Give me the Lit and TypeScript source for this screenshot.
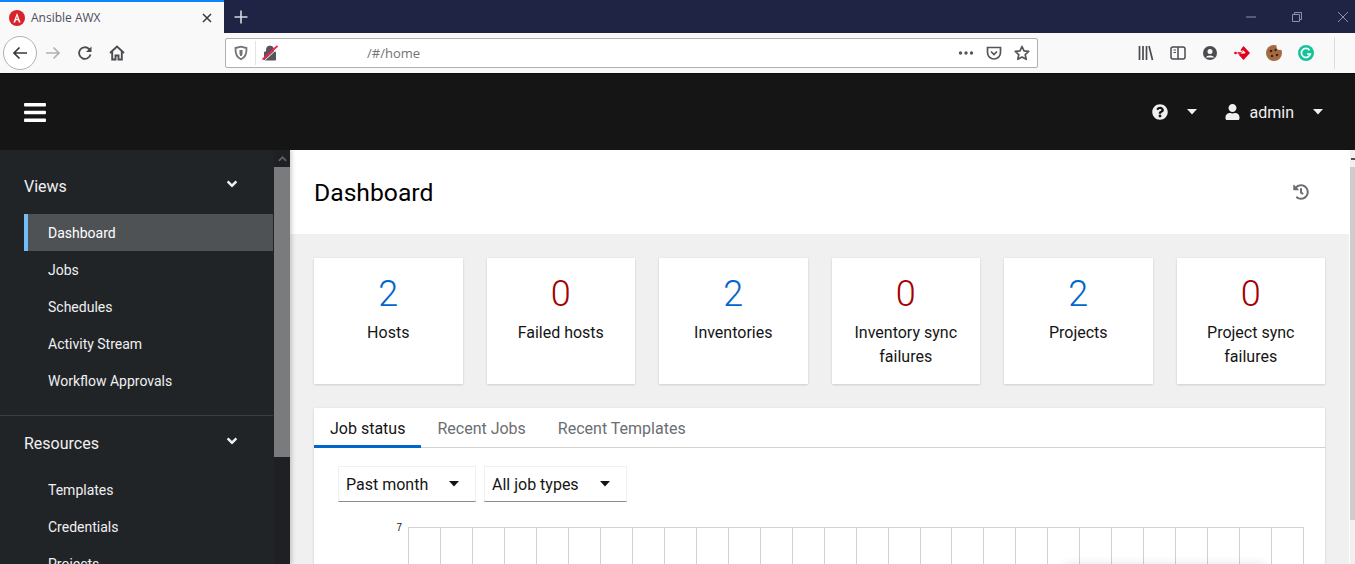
import { LitElement, html, css, svg } from 'lit';
import { customElement } from 'lit/decorators.js';

const stats = [
  { n: 2, label: 'Hosts', bad: false },
  { n: 0, label: 'Failed hosts', bad: true },
  { n: 2, label: 'Inventories', bad: false },
  { n: 0, label: 'Inventory sync failures', bad: true },
  { n: 2, label: 'Projects', bad: false },
  { n: 0, label: 'Project sync failures', bad: true },
];

const views = ['Dashboard', 'Jobs', 'Schedules', 'Activity Stream', 'Workflow Approvals'];
const resources = ['Templates', 'Credentials', 'Projects'];

const icon = (vb: string, d: any, cls = '') => html`<svg class=${cls} viewBox=${vb}>${d}</svg>`;

// font awesome style glyphs used by the app header
const bars = svg`<path fill="currentColor" d="M16 132h416c8.837 0 16-7.163 16-16V76c0-8.837-7.163-16-16-16H16C7.163 60 0 67.163 0 76v40c0 8.837 7.163 16 16 16zm0 160h416c8.837 0 16-7.163 16-16v-40c0-8.837-7.163-16-16-16H16c-8.837 0-16 7.163-16 16v40c0 8.837 7.163 16 16 16zm0 160h416c8.837 0 16-7.163 16-16v-40c0-8.837-7.163-16-16-16H16c-8.837 0-16 7.163-16 16v40c0 8.837 7.163 16 16 16z"/>`;
const question = svg`<path fill="currentColor" d="M504 256c0 136.997-111.043 248-248 248S8 392.997 8 256C8 119.083 119.043 8 256 8s248 111.083 248 248zM262.655 90c-54.497 0-89.255 22.957-116.549 63.758-3.536 5.286-2.353 12.415 2.715 16.258l34.699 26.31c5.205 3.947 12.621 3.008 16.665-2.122 17.864-22.658 30.113-35.797 57.303-35.797 20.429 0 45.698 13.148 45.698 32.958 0 14.976-12.363 22.667-32.534 33.976C247.128 238.528 216 254.941 216 296v4c0 6.627 5.373 12 12 12h56c6.627 0 12-5.373 12-12v-1.333c0-28.462 83.186-29.647 83.186-106.667 0-58.002-60.165-102-116.531-102zM256 338c-25.365 0-46 20.635-46 46 0 25.364 20.635 46 46 46s46-20.636 46-46c0-25.365-20.635-46-46-46z"/>`;
const user = svg`<path fill="currentColor" d="M224 256c70.7 0 128-57.3 128-128S294.7 0 224 0 96 57.3 96 128s57.3 128 128 128zm89.6 32h-16.7c-22.2 10.2-46.9 16-72.9 16s-50.6-5.8-72.9-16h-16.7C60.2 288 0 348.2 0 422.4V464c0 26.5 21.5 48 48 48h352c26.5 0 48-21.5 48-48v-41.6c0-74.2-60.2-134.4-134.4-134.4z"/>`;
const angle = svg`<path fill="currentColor" d="M143 352.3L7 216.3c-9.4-9.4-9.4-24.6 0-33.9l22.6-22.6c9.4-9.4 24.6-9.4 33.9 0l96.4 96.4 96.4-96.4c9.4-9.4 24.6-9.4 33.9 0l22.6 22.6c9.4 9.4 9.4 24.6 0 33.9l-136 136c-9.2 9.4-24.4 9.4-33.8 0z"/>`;
const history = svg`<path fill="currentColor" d="M504 255.531c.253 136.64-111.18 248.372-247.82 248.468-59.015.042-113.223-20.53-155.822-54.911-11.077-8.94-11.905-25.541-1.839-35.607l11.267-11.267c8.609-8.609 22.353-9.551 31.891-1.984C173.062 425.135 212.781 440 256 440c101.705 0 184-82.311 184-184 0-101.705-82.311-184-184-184-48.814 0-93.149 18.969-126.068 49.932l50.754 50.754c10.08 10.08 2.941 27.314-11.313 27.314H24c-8.837 0-16-7.163-16-16V38.627c0-14.254 17.234-21.393 27.314-11.314l49.372 49.372C129.209 34.136 189.552 8 256 8c136.81 0 247.747 110.78 248 247.531zm-180.912 78.784l9.823-12.63c8.138-10.463 6.253-25.542-4.21-33.679L288 256.349V152c0-13.255-10.745-24-24-24h-16c-13.255 0-24 10.745-24 24v135.651l65.409 50.874c10.463 8.137 25.542 6.253 33.679-4.21z"/>`;

const caret = html`<svg class="caret" viewBox="0 0 10 6"><path fill="currentColor" d="M0 0h10L5 5.5z"/></svg>`;

@customElement('app-root')
export class AppRoot extends LitElement {
  static styles = css`
    :host {
      display: block;
      height: 100vh;
      overflow: hidden;
      font-family: Roboto, sans-serif;
      color: #151515;
    }
    svg { display: block; flex: none; }

    /* browser chrome */
    .tabbar { display: flex; height: 33px; background: #1f2344; }
    .tab {
      width: 224px;
      box-sizing: border-box;
      display: flex;
      align-items: center;
      padding: 0 9px;
      gap: 6px;
      background: #f9f9fa;
      border-top: 2px solid #0a84ff;
      font: 12px 'Open Sans', sans-serif;
      color: #4d4f57;
    }
    .tab .title { flex: 1; }
    .tab-close { width: 12px; height: 12px; margin-right: 2px; color: #38383d; }
    .fav { width: 16px; height: 16px; }
    .new-tab { width: 16px; height: 16px; margin: 1px 0 0 9px; align-self: center; color: #d8d9df; }
    .winbtns { margin-left: auto; display: flex; align-items: center; color: #8f92a6; padding-right: 6px; }
    .winbtns svg { width: 12px; height: 12px; }
    .winbtns .min { margin-right: 34px; }
    .winbtns .max { margin-right: 34px; }

    .toolbar {
      display: flex;
      align-items: center;
      height: 40px;
      background: #f9f9fa;
      border-bottom: 1px solid #0c0c0d;
      color: #4b4b50;
    }
    .nav-btns { width: 225px; flex: none; display: flex; align-items: center; padding-left: 3px; box-sizing: border-box; }
    .back {
      width: 34px;
      height: 34px;
      box-sizing: border-box;
      border: 1px solid #b1b1b3;
      border-radius: 50%;
      background: #fff;
      display: flex;
      align-items: center;
      justify-content: center;
    }
    .tool { width: 16px; height: 16px; }
    .fwd { margin-left: 8px; color: #b1b1b3; }
    .reload { margin-left: 16px; }
    .home { margin-left: 16px; }
    .urlbar {
      width: 813px;
      flex: none;
      height: 30px;
      box-sizing: border-box;
      display: flex;
      align-items: center;
      background: #fff;
      border: 1px solid #b1b1b3;
      border-radius: 2px;
      padding: 0 7px;
      font: 13px 'Open Sans', sans-serif;
      color: #737373;
    }
    .urlbar .sep { width: 1px; height: 24px; background: #e4e4e6; margin: 0 6px 0 6px; }
    .urlbar .url { flex: 1; padding-left: 89px; }
    .urlbar .pocket { margin: 0 12px; }
    .addons { display: flex; align-items: center; flex: 1; padding-left: 100px; gap: 16px; }
    .addons .divider { width: 1px; height: 32px; background: #dcdcde; margin-left: 4px; }
    .addons .menu { margin-left: 3px; }

    /* app */
    .masthead {
      height: 76px;
      background: #151515;
      color: #fff;
      display: flex;
      align-items: center;
      padding: 0 32px 0 24px;
    }
    .hamburger { width: 22px; height: 25px; }
    .head-right { margin-left: auto; display: flex; align-items: center; font-size: 16px; color: #f0f0f0; }
    .head-right .q { width: 16px; height: 16px; }
    .head-right .q + .caret { margin-left: 19px; }
    .head-right .u { width: 15px; height: 16px; margin-left: 28px; margin-right: 10px; }
    .caret { width: 10px; height: 6px; }
    .head-right .last { margin-left: 19px; }

    .body { display: flex; height: 414px; overflow: hidden; }
    .sidebar {
      width: 290px;
      flex: none;
      display: flex;
      background: #212427;
      color: #f0f0f0;
      position: relative;
      z-index: 1;
      box-shadow: 2px 0 4px rgba(0, 0, 0, 0.18);
    }
    .nav { width: 273px; padding-top: 8px; flex: none; }
    .section { padding-bottom: 16px; box-shadow: 0 1px 0 #3c3f42; }
    .section:last-child { box-shadow: none; }
    .sec-head {
      display: flex;
      align-items: center;
      justify-content: space-between;
      height: 56px;
      padding: 0 34px 0 24px;
      font-size: 16px;
    }
    .sec-head svg { width: 14px; height: 16px; margin-top: -4px; }
    .item {
      height: 37px;
      margin-left: 24px;
      padding-left: 24px;
      display: flex;
      align-items: center;
      font-size: 14px;
    }
    .item.current { background: #4f5255; color: #fff; box-shadow: inset 4px 0 0 #73bcf7; }
    .side-scroll { width: 16px; margin-left: 1px; background: #1e2023; display: flex; flex-direction: column; }
    .arrow { height: 17px; flex: none; display: flex; align-items: center; justify-content: center; color: #5f6163; }
    .arrow svg { width: 9px; height: 6px; }
    .side-thumb { height: 290px; background: #7a7b7c; }

    main { flex: 1; min-width: 0; background: #f0f0f0; display: flex; }
    .content { flex: 1; min-width: 0; }
    .page-head {
      height: 84px;
      background: #fff;
      display: flex;
      align-items: center;
      justify-content: space-between;
      padding: 0 40px 0 24px;
      box-sizing: border-box;
    }
    h1 { margin: 0; font-size: 24.7px; font-weight: 400; color: #000; }
    .hist { width: 16px; height: 16px; color: #6a6e73; }
    .page-body { padding: 24px 24px 0 24px; }
    .stats { display: grid; grid-template-columns: repeat(6, 1fr); gap: 24px; }
    .stat {
      height: 126px;
      background: #fff;
      box-shadow: 0 1px 2px rgba(3, 3, 3, 0.12), 0 0 2px rgba(3, 3, 3, 0.06);
      text-align: center;
      padding: 16px 16px 0;
      box-sizing: border-box;
      font-size: 16px;
      line-height: 24px;
    }
    .num { font-size: 36px; line-height: 40px; font-weight: 300; color: #06c; margin-bottom: 7px; }
    .num.bad { color: #a30000; }

    .panel {
      margin-top: 24px;
      height: 300px;
      background: #fff;
      box-shadow: 0 1px 2px rgba(3, 3, 3, 0.12), 0 0 2px rgba(3, 3, 3, 0.06);
    }
    .tabs { display: flex; height: 40px; border-bottom: 1px solid #d2d2d2; box-sizing: border-box; font-size: 16px; color: #6a6e73; }
    .tabs div { padding: 0 16px; line-height: 41px; }
    .tabs .on { color: #151515; box-shadow: inset 0 -3px 0 #06c; height: 40px; box-sizing: border-box; }
    .filters { display: flex; gap: 8px; padding: 18px 24px 0; }
    .select {
      height: 36px;
      box-sizing: border-box;
      display: flex;
      align-items: center;
      justify-content: space-between;
      padding: 0 7px;
      font-size: 16px;
      border: 1px solid #f0f0f0;
      border-bottom-color: #8a8d90;
    }
    .select .caret { color: #151515; margin-right: 9px; }
    .s1 { width: 138px; }
    .s2 { width: 143px; }
    .chart { display: flex; padding: 25px 21px 0 0; position: relative; }
    .y { width: 94px; text-align: right; padding-right: 6px; box-sizing: border-box; font: 10px/1 'Liberation Sans', sans-serif; margin-top: -4px; height: 10px; flex: none; }
    .grid { flex: 1; height: 60px; display: flex; border: solid #d2d2d2; border-width: 1px 0 0 1px; box-sizing: border-box; }
    .grid i { flex: 1; border-right: 1px solid #d2d2d2; }
    .tip-shadow {
      position: absolute;
      right: 60px;
      top: 64px;
      width: 200px;
      height: 40px;
      background: #fff;
      box-shadow: 0 0 12px rgba(0, 0, 0, 0.16);
      border-radius: 4px;
    }

    .main-scroll { width: 6px; box-sizing: border-box; flex: none; background: #f0f0f0; border-left: 1px solid #fff; display: flex; flex-direction: column; }
    .main-scroll .up { height: 17px; box-sizing: border-box; padding: 8px 0 0 1px; }
    .main-scroll .up span { display: block; width: 4px; height: 2px; background: #505050; }
    .main-scroll .thumb { height: 353px; background: #cdcdcd; }
  `;

  render() {
    return html`
      <div class="tabbar">
        <div class="tab">
          <svg class="fav" viewBox="0 0 16 16">
            <circle cx="8" cy="8" r="8" fill="#d8232a" />
            <path fill="#fff" d="M8 3l3.600 9.500h-1.700L9.100 10.300H6.900L6.100 12.500H4.400zm0 3.100L7.300 8.900h1.400z" />
          </svg>
          <span class="title">Ansible AWX</span>
          <svg class="tab-close" viewBox="0 0 12 12"><path d="M2 2l8 8M10 2l-8 8" stroke="currentColor" stroke-width="1.500" /></svg>
        </div>
        <svg class="new-tab" viewBox="0 0 16 16"><path d="M8 1.500v13M1.500 8h13" stroke="currentColor" stroke-width="1.600" /></svg>
        <div class="winbtns">
          <svg class="min" viewBox="0 0 12 12"><path d="M1 6h10" stroke="currentColor" /></svg>
          <svg class="max" viewBox="0 0 12 12"><path d="M1.500 3.500h7v7h-7zM3.500 3.500v-2h7v7h-2" fill="none" stroke="currentColor" /></svg>
          <svg viewBox="0 0 12 12"><path d="M1 1l10 10M11 1L1 11" stroke="currentColor" /></svg>
        </div>
      </div>
      <div class="toolbar">
        <div class="nav-btns">
          <div class="back">
            <svg class="tool" viewBox="0 0 16 16"><path d="M15 8H2M7.500 2.500L2 8l5.500 5.500" fill="none" stroke="#38383d" stroke-width="1.700" /></svg>
          </div>
          <svg class="tool fwd" viewBox="0 0 16 16"><path d="M1 8h13M8.500 2.500L14 8l-5.500 5.500" fill="none" stroke="currentColor" stroke-width="1.700" /></svg>
          <svg class="tool reload" viewBox="0 0 16 16"><path d="M13.500 9.500A5.800 5.800 0 1 1 12 4l1.500 1.500" fill="none" stroke="currentColor" stroke-width="1.800" /><path d="M14.500 1.500v5.500H9z" fill="currentColor" /></svg>
          <svg class="tool home" viewBox="0 0 16 16"><path d="M1 8l7-6.500L15 8M3.200 6.500v8h3.300v-4h3v4h3.300v-8" fill="none" stroke="currentColor" stroke-width="1.900" /></svg>
        </div>
        <div class="urlbar">
          <svg class="tool" viewBox="0 0 16 16"><path d="M2.500 3L8 1.700 13.500 3c.3 5.500-1.700 9.500-5.500 11.300C4.200 12.500 2.200 8.500 2.500 3z" fill="none" stroke="currentColor" stroke-width="1.800" /><path d="M6.500 5h3v3.500L8.800 11H7.200L6.500 8.500z" fill="currentColor" /></svg>
          <div class="sep"></div>
          <svg class="tool" viewBox="0 0 16 16">
            <path d="M2.500 7h11v8h-11zM4.500 7V4.500a3.500 3.500 0 0 1 7 0V7" fill="#55555a" stroke="#55555a" />
            <path d="M1 15L15.500 1.500" stroke="#fff" stroke-width="1" transform="translate(0.800 1.200)" />
            <path d="M0.500 14.500L15.500 1" stroke="#f6214f" stroke-width="1.800" />
          </svg>
          <span class="url">/#/home</span>
          <svg class="tool" viewBox="0 0 16 16" fill="#55555a"><circle cx="2.500" cy="8" r="1.700" /><circle cx="8" cy="8" r="1.700" /><circle cx="13.500" cy="8" r="1.700" /></svg>
          <svg class="tool pocket" viewBox="0 0 16 16"><path d="M1.500 2.500h13v5a6.500 6.500 0 0 1-13 0z" fill="none" stroke="#55555a" stroke-width="1.700" /><path d="M5 6.500l3 3 3-3" fill="none" stroke="#55555a" stroke-width="1.700" /></svg>
          <svg class="tool" viewBox="0 0 16 16"><path d="M8 1.500l2 4.400 4.700.5-3.500 3.200 1 4.700L8 12l-4.200 2.300 1-4.700L1.300 6.400 6 5.900z" fill="none" stroke="#55555a" stroke-width="1.700" stroke-linejoin="round" /></svg>
        </div>
        <div class="addons">
          <svg class="tool" viewBox="0 0 16 16"><path d="M1.500 1v14M5 1v14M8.500 1v14M11 1l3.500 14" stroke="currentColor" stroke-width="1.700" fill="none" /></svg>
          <svg class="tool" viewBox="0 0 16 16"><rect x="1" y="2" width="14" height="12" rx="2" fill="none" stroke="currentColor" stroke-width="1.500" /><path d="M8 2v12" stroke="currentColor" stroke-width="1.500" /><path d="M3.500 5H6M3.500 7.500H6" stroke="currentColor" /></svg>
          <svg class="tool" viewBox="0 0 16 16"><circle cx="8" cy="8" r="7" fill="currentColor" /><circle cx="8" cy="6.500" r="2.500" fill="#f9f9fa" /><path d="M3.500 12.500a5 3.500 0 0 1 9 0z" fill="#f9f9fa" /></svg>
          <svg class="tool" viewBox="0 0 16 16">
            <path d="M9.500 1l6.500 7-6.500 7-5-5.500 5-1.500-3-3z" fill="#e2001a" />
            <circle cx="1.500" cy="8" r="1.300" fill="#e2001a" />
            <path d="M3.500 8h7.500M8.500 5.500L11 8" fill="none" stroke="#fff" stroke-width="1.200" />
            <path d="M3.500 8h4" stroke="#e2001a" stroke-width="1.600" />
          </svg>
          <svg class="tool" viewBox="0 0 16 16"><circle cx="8" cy="8" r="8" fill="#a66a43" /><circle cx="14" cy="1.500" r="3.500" fill="#f9f9fa" /><circle cx="5" cy="6" r="1.300" fill="#3a2416" /><circle cx="9.500" cy="5" r="1.200" fill="#3a2416" /><circle cx="11" cy="10" r="1.300" fill="#3a2416" /><circle cx="6" cy="11" r="1.200" fill="#3a2416" /></svg>
          <svg class="tool" viewBox="0 0 16 16"><circle cx="8" cy="8" r="8" fill="#15c39a" /><path d="M11.500 5.200A4.500 4.500 0 1 0 12.300 9H9" fill="none" stroke="#fff" stroke-width="1.700" /></svg>
          <div class="divider"></div>
          <svg class="tool menu" viewBox="0 0 16 16"><path d="M1 3h14M1 8h14M1 13h14" stroke="currentColor" stroke-width="2" /></svg>
        </div>
      </div>

      <header class="masthead">
        ${icon('0 0 448 512', bars, 'hamburger')}
        <div class="head-right">
          ${icon('0 0 512 512', question, 'q')}
          ${caret}
          ${icon('0 0 448 512', user, 'u')}
          <span class="admin">admin</span>
          <span class="last">${caret}</span>
        </div>
      </header>

      <div class="body">
        <aside class="sidebar">
          <nav class="nav">
            <div class="section">
              <div class="sec-head">Views ${icon('0 0 320 512', angle)}</div>
              ${views.map((v, i) => html`<div class="item ${i === 0 ? 'current' : ''}">${v}</div>`)}
            </div>
            <div class="section">
              <div class="sec-head">Resources ${icon('0 0 320 512', angle)}</div>
              ${resources.map((v) => html`<div class="item">${v}</div>`)}
            </div>
          </nav>
          <div class="side-scroll">
            <div class="arrow"><svg viewBox="0 0 10 6"><path d="M1 5l4-4 4 4" fill="none" stroke="currentColor" stroke-width="2" /></svg></div>
            <div class="side-thumb"></div>
          </div>
        </aside>
        <main>
          <div class="content">
            <div class="page-head">
              <h1>Dashboard</h1>
              ${icon('0 0 512 512', history, 'hist')}
            </div>
            <div class="page-body">
              <div class="stats">
                ${stats.map((s) => html`
                  <div class="stat">
                    <div class="num ${s.bad ? 'bad' : ''}">${s.n}</div>
                    ${s.label}
                  </div>
                `)}
              </div>
              <section class="panel">
                <div class="tabs">
                  <div class="on">Job status</div>
                  <div>Recent Jobs</div>
                  <div>Recent Templates</div>
                </div>
                <div class="filters">
                  <div class="select s1">Past month ${caret}</div>
                  <div class="select s2">All job types ${caret}</div>
                </div>
                <div class="chart">
                  <div class="y">7</div>
                  <div class="grid">${Array.from({ length: 28 }, () => html`<i></i>`)}</div>
                  <div class="tip-shadow"></div>
                </div>
              </section>
            </div>
          </div>
          <div class="main-scroll">
            <div class="up"><span></span></div>
            <div class="thumb"></div>
          </div>
        </main>
      </div>
    `;
  }
}
